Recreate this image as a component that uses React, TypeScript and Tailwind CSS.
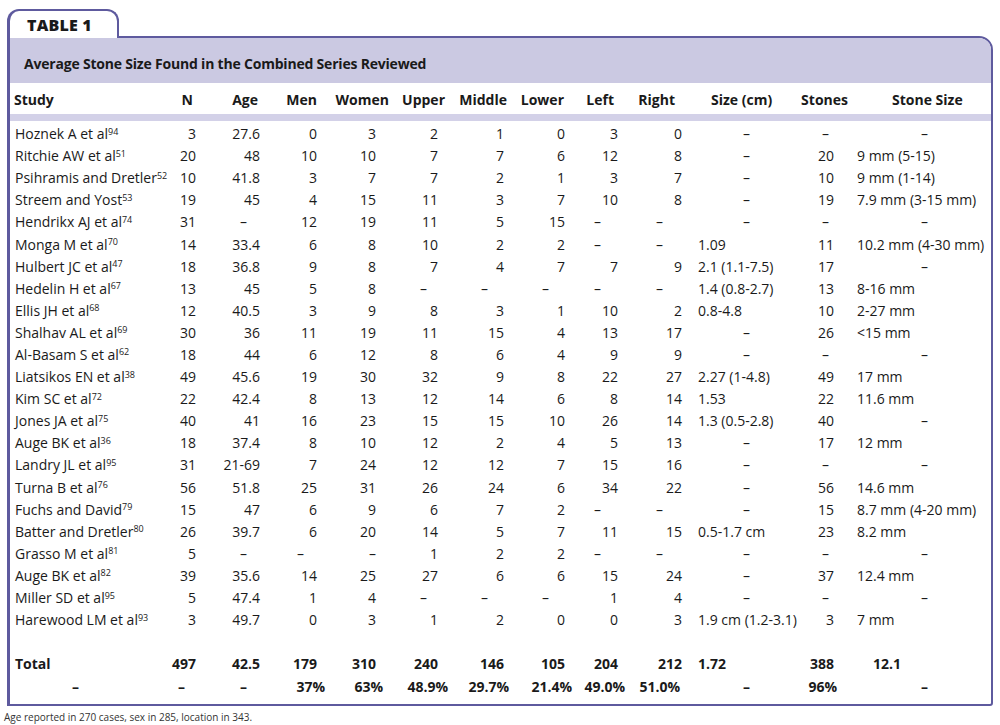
type Row = [string, string, ...string[]]

const D = "–"

// study | sup | N | Age | Men | Women | Upper | Middle | Lower | Left | Right | Size | Stones | Stone Size
const rows: Row[] = [
  ["Hoznek A et al", "94", "3", "27.6", "0", "3", "2", "1", "0", "3", "0", D, D, D],
  ["Ritchie AW et al", "51", "20", "48", "10", "10", "7", "7", "6", "12", "8", D, "20", "9 mm (5-15)"],
  ["Psihramis and Dretler", "52", "10", "41.8", "3", "7", "7", "2", "1", "3", "7", D, "10", "9 mm (1-14)"],
  ["Streem and Yost", "53", "19", "45", "4", "15", "11", "3", "7", "10", "8", D, "19", "7.9 mm (3-15 mm)"],
  ["Hendrikx AJ et al", "74", "31", D, "12", "19", "11", "5", "15", D, D, D, D, D],
  ["Monga M et al", "70", "14", "33.4", "6", "8", "10", "2", "2", D, D, "1.09", "11", "10.2 mm (4-30 mm)"],
  ["Hulbert JC et al", "47", "18", "36.8", "9", "8", "7", "4", "7", "7", "9", "2.1 (1.1-7.5)", "17", D],
  ["Hedelin H et al", "67", "13", "45", "5", "8", D, D, D, D, D, "1.4 (0.8-2.7)", "13", "8-16 mm"],
  ["Ellis JH et al", "68", "12", "40.5", "3", "9", "8", "3", "1", "10", "2", "0.8-4.8", "10", "2-27 mm"],
  ["Shalhav AL et al", "69", "30", "36", "11", "19", "11", "15", "4", "13", "17", D, "26", "<15 mm"],
  ["Al-Basam S et al", "62", "18", "44", "6", "12", "8", "6", "4", "9", "9", D, D, D],
  ["Liatsikos EN et al", "38", "49", "45.6", "19", "30", "32", "9", "8", "22", "27", "2.27 (1-4.8)", "49", "17 mm"],
  ["Kim SC et al", "72", "22", "42.4", "8", "13", "12", "14", "6", "8", "14", "1.53", "22", "11.6 mm"],
  ["Jones JA et al", "75", "40", "41", "16", "23", "15", "15", "10", "26", "14", "1.3 (0.5-2.8)", "40", D],
  ["Auge BK et al", "36", "18", "37.4", "8", "10", "12", "2", "4", "5", "13", D, "17", "12 mm"],
  ["Landry JL et al", "95", "31", "21-69", "7", "24", "12", "12", "7", "15", "16", D, D, D],
  ["Turna B et al", "76", "56", "51.8", "25", "31", "26", "24", "6", "34", "22", D, "56", "14.6 mm"],
  ["Fuchs and David", "79", "15", "47", "6", "9", "6", "7", "2", D, D, D, "15", "8.7 mm (4-20 mm)"],
  ["Batter and Dretler", "80", "26", "39.7", "6", "20", "14", "5", "7", "11", "15", "0.5-1.7 cm", "23", "8.2 mm"],
  ["Grasso M et al", "81", "5", D, D, D, "1", "2", "2", D, D, D, D, D],
  ["Auge BK et al", "82", "39", "35.6", "14", "25", "27", "6", "6", "15", "24", D, "37", "12.4 mm"],
  ["Miller SD et al", "95", "5", "47.4", "1", "4", D, D, D, "1", "4", D, D, D],
  ["Harewood LM et al", "93", "3", "49.7", "0", "3", "1", "2", "0", "0", "3", "1.9 cm (1.2-3.1)", "3", "7 mm"],
]

const headers = ["Study", "N", "Age", "Men", "Women", "Upper", "Middle", "Lower", "Left", "Right", "Size (cm)", "Stones", "Stone Size"]

const gridCols =
  "grid grid-cols-[140px_46px_64px_57px_59px_62px_66px_61px_53px_64px_108px_44px_157px]"

const headCls = [
  "pl-[4px]",
  "text-right pr-[3px]",
  "text-right pr-[2px]",
  "text-right",
  "text-right -mr-[13px]",
  "text-right -mr-[7px]",
  "text-right -mr-[3px]",
  "text-right pr-[1px]",
  "text-right pr-[4px]",
  "text-right pr-[7px]",
  "pl-[29px]",
  "text-right -mr-[14px]",
  "pl-[58px]",
]

const numCls = [
  "pl-[5px]",
  "text-right",
  "text-right",
  "text-right",
  "text-right",
  "text-right",
  "text-right",
  "text-right",
  "text-right",
  "text-right",
  "pl-[16px]",
  "text-right",
  "pl-[23px]",
]

const dashCls = [
  "pl-[62px]",
  "text-right pr-[11px]",
  "text-right pr-[13px]",
  "text-right pr-[13px]",
  "text-right",
  "text-right pr-[11px]",
  "text-right pr-[16px]",
  "text-right pr-[16px]",
  "text-right pr-[17px]",
  "text-right pr-[19px]",
  "pl-[61px]",
  "text-right pr-[5px]",
  "pl-[87px]",
]

const totals = ["Total", "497", "42.5", "179", "310", "240", "146", "105", "204", "212", "1.72", "388", "12.1"]
const totalOver: Record<number, string> = { 12: "pl-[39px]" }

const pcts = [D, D, D, "37%", "63%", "48.9%", "29.7%", "21.4%", "49.0%", "51.0%", D, "96%", D]
const pctOver: Record<number, string> = {
  3: "text-right -mr-[8px]",
  4: "text-right -mr-[7px]",
  5: "text-right -mr-[10px]",
  6: "text-right -mr-[5px]",
  7: "text-right -mr-[7px]",
  8: "text-right -mr-[7px]",
  9: "text-right pr-[2px]",
  11: "text-right -mr-[3px]",
}

function cellCls(v: string, i: number, over?: Record<number, string>) {
  if (over && over[i]) return over[i]
  if (i === 0 && v !== D) return numCls[0]
  return v === D ? dashCls[i] : numCls[i]
}

function DataRow({ row }: { row: Row }) {
  const [study, sup, ...vals] = row
  return (
    <div className={`${gridCols} h-[22.1px] items-center leading-[22px]`}>
      <div className="pl-[5px] whitespace-nowrap">
        {study}
        <sup className="text-[9px]">{sup}</sup>
      </div>
      {vals.map((v, i) => (
        <div key={i} className={`whitespace-nowrap ${cellCls(v, i + 1)}`}>
          {v}
        </div>
      ))}
    </div>
  )
}

function SummaryRow({ vals, over }: { vals: string[]; over: Record<number, string> }) {
  return (
    <div className={`${gridCols} h-[23px] items-center leading-[22px] font-bold`}>
      {vals.map((v, i) => (
        <div key={i} className={`whitespace-nowrap ${cellCls(v, i, over)}`}>
          {v}
        </div>
      ))}
    </div>
  )
}

export default function App() {
  return (
    <div className="w-[1000px] h-[725px] bg-white text-[#1a1a1a] font-['Open_Sans',sans-serif] overflow-hidden">
      <div className="pt-[9px] pl-[7px]">
        {/* tab */}
        <div className="relative z-10 -mb-[2px] w-[112px] h-[29px] bg-white border-2 border-b-0 border-l-[3px] border-[#5e5a9e] rounded-t-[12px] pl-[17px] flex items-center">
          <span className="text-[16px] font-extrabold leading-none tracking-[0.2px]">TABLE 1</span>
        </div>
        {/* main box */}
        <div className="w-[986px] border-2 border-l-[3px] border-[#5e5a9e] rounded-tr-[14px] rounded-br-[3px] overflow-hidden">
          <div className="h-[45px] bg-[#cbc9e2] pl-[14px] pt-[5px] flex items-center">
            <span className="text-[14px] font-bold tracking-[-0.2px]">
              Average Stone Size Found in the Combined Series Reviewed
            </span>
          </div>
          <div className="text-[14px]">
            <div className={`${gridCols} h-[31px] items-center font-bold pt-[2px]`}>
              {headers.map((h, i) => (
                <div key={h} className={`whitespace-nowrap ${headCls[i]}`}>
                  {h}
                </div>
              ))}
            </div>
            <div className="h-[7px] bg-[#d3d1e8]" />
            <div className="pt-[2px]">
              {rows.map((r, i) => (
                <DataRow key={i} row={r} />
              ))}
            </div>
            <div className="mt-[21px] pb-[6px]">
              <SummaryRow vals={totals} over={totalOver} />
              <SummaryRow vals={pcts} over={pctOver} />
            </div>
          </div>
        </div>
      </div>
      <div className="pl-[4px] pt-[4px] text-[10px] leading-[14px] text-[#333]">
        Age reported in 270 cases, sex in 285, location in 343.
      </div>
    </div>
  )
}
